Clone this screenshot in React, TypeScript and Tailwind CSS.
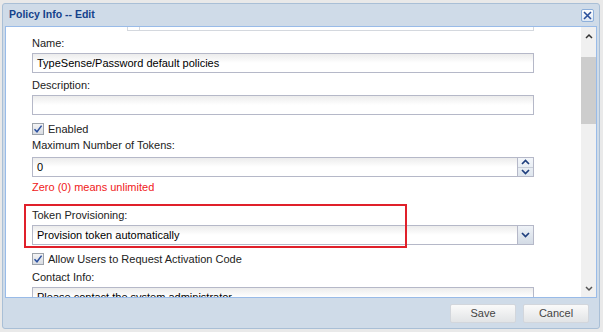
import React from "react";

const font = { fontFamily: '"Liberation Sans", Arial, sans-serif' };

function Check() {
  return (
    <span className="relative inline-flex h-[12px] w-[12px] shrink-0 items-center justify-center border border-[#9da3ab] bg-gradient-to-b from-[#f4f4f4] to-[#d8dce2]">
      <svg width="10" height="10" viewBox="0 0 10 10">
        <path d="M1.5 5.2 L4 7.8 L8.6 1.6" fill="none" stroke="#2b50a0" strokeWidth="1.5" />
      </svg>
    </span>
  );
}

function Input({ value, children }: { value?: string; children?: React.ReactNode }) {
  return (
    <div className="flex h-[20px] w-[502px] border border-[#b5b8c8] bg-white">
      <div className="flex flex-1 items-center bg-gradient-to-b from-[#ececec] via-white to-white px-[4px] text-[11px] leading-none text-black">
        {value}
      </div>
      {children}
    </div>
  );
}

export default function App() {
  return (
    <div className="h-[332px] w-[603px] bg-[#e9e9e9] pl-[2px] pt-[3px] text-[11px]" style={font}>
      <div className="flex h-[326px] w-[598px] flex-col rounded-[3px] border border-[#a9bfd6] bg-[#cfdbe8] px-[2px]">
        {/* title bar */}
        <div className="flex h-[22px] items-center justify-between pl-[4px] pr-[3px]">
          <span className="text-[10.5px] font-bold text-[#15428b]">Policy Info -- Edit</span>
          <span className="flex h-[13px] w-[13px] items-center justify-center rounded-[2px] border border-[#8eb0db] bg-gradient-to-b from-white to-[#dde7f3]">
            <svg width="9" height="9" viewBox="0 0 9 9">
              <path d="M1 1 L8 8 M8 1 L1 8" stroke="#2a4f9a" strokeWidth="1.6" />
            </svg>
          </span>
        </div>

        {/* content */}
        <div className="flex h-[272px] border border-[#99bbe8] bg-white">
          <div className="flex-1 overflow-hidden pl-[26px]">
            {/* remnant of scrolled field */}
            <div className="ml-[95px] flex h-[4px] w-[407px] border-x border-b border-[#d4d8de]">
              <div className="ml-[11px] h-full border-l border-[#d4d8de]" />
            </div>

            <div className="mt-[4px] h-[16px] leading-[16px] text-[#222]">Name:</div>
            <div className="mt-[2px]">
              <Input value="TypeSense/Password default policies" />
            </div>

            <div className="mt-[4px] h-[16px] leading-[16px] text-[#222]">Description:</div>
            <div className="mt-[2px]">
              <Input />
            </div>

            <div className="mt-[6px] flex h-[16px] items-center gap-[4px] text-[#222]">
              <Check />
              <span>Enabled</span>
            </div>

            <div className="h-[16px] leading-[16px] text-[#222]">Maximum Number of Tokens:</div>
            <div className="mt-[4px]">
              <Input value="0">
                <div className="flex w-[16px] flex-col border-l border-[#b5b8c8] bg-gradient-to-b from-[#f3f6fa] to-[#dfe6ee]">
                  <div className="flex flex-1 items-center justify-center border-b border-[#c8ced8]">
                    <svg width="9" height="6" viewBox="0 0 9 6">
                      <path d="M1 5 L4.5 1.5 L8 5" fill="none" stroke="#1f3f7e" strokeWidth="1.7" />
                    </svg>
                  </div>
                  <div className="flex flex-1 items-center justify-center">
                    <svg width="9" height="6" viewBox="0 0 9 6">
                      <path d="M1 1 L4.5 4.5 L8 1" fill="none" stroke="#1f3f7e" strokeWidth="1.7" />
                    </svg>
                  </div>
                </div>
              </Input>
            </div>

            <div className="mt-[2px] h-[16px] leading-[16px] text-[#f02020]">Zero (0) means unlimited</div>

            <div className="relative mt-[12px]">
              <div className="h-[16px] leading-[16px] text-[#222]">Token Provisioning:</div>
              <div className="mt-[2px]">
                <Input value="Provision token automatically">
                  <div className="flex w-[16px] items-center justify-center border-l border-[#b5b8c8] bg-gradient-to-b from-[#eef2f7] to-[#d3dbe5]">
                    <svg width="9" height="6" viewBox="0 0 9 6">
                      <path d="M1 1 L4.5 4.5 L8 1" fill="none" stroke="#1f3f7e" strokeWidth="1.7" />
                    </svg>
                  </div>
                </Input>
              </div>
              <div className="pointer-events-none absolute left-[-8px] top-[-3px] h-[44px] w-[383px] border-2 border-[#e0202a]" />
            </div>

            <div className="mt-[6px] flex h-[16px] items-center gap-[4px] text-[#222]">
              <Check />
              <span>Allow Users to Request Activation Code</span>
            </div>

            <div className="mt-[2px] h-[16px] leading-[16px] text-[#222]">Contact Info:</div>
            <div className="mt-[2px]">
              <Input value="Please contact the system administrator" />
            </div>
          </div>

          {/* scrollbar */}
          <div className="flex w-[15px] flex-col bg-[#f0f0f0]">
            <div className="flex h-[17px] items-center justify-center">
              <svg width="8" height="6" viewBox="0 0 8 6">
                <path d="M1 5 L4 2 L7 5" fill="none" stroke="#333" strokeWidth="1.5" />
              </svg>
            </div>
            <div className="mt-[13px] h-[67px] bg-[#cdcdcd]" />
            <div className="flex-1" />
            <div className="flex h-[17px] items-center justify-center">
              <svg width="8" height="6" viewBox="0 0 8 6">
                <path d="M1 1 L4 4 L7 1" fill="none" stroke="#555" strokeWidth="1.5" />
              </svg>
            </div>
          </div>
        </div>

        {/* footer */}
        <div className="flex h-[30px] items-center justify-end gap-[7px] pr-[8px]">
          <button className="h-[19px] w-[66px] rounded-[2px] border border-[#d2d6dc] bg-gradient-to-b from-[#fafafa] to-[#e2e4e6] text-[11px] text-[#444]">
            Save
          </button>
          <button className="h-[19px] w-[66px] rounded-[2px] border border-[#d2d6dc] bg-gradient-to-b from-[#fafafa] to-[#e2e4e6] text-[11px] text-[#444]">
            Cancel
          </button>
        </div>
      </div>
    </div>
  );
}
